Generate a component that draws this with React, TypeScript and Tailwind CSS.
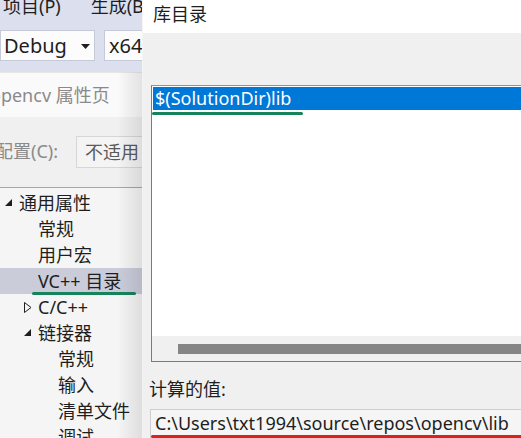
const FONT = "font-['Noto_Sans','Noto_Sans_CJK_SC',sans-serif]";

type TreeItem = {
  label: string;
  level: 0 | 1 | 2;
  icon?: "open" | "closed";
  selected?: boolean;
};

const tree: TreeItem[] = [
  { label: "通用属性", level: 0, icon: "open" },
  { label: "常规", level: 1 },
  { label: "用户宏", level: 1 },
  { label: "VC++ 目录", level: 1, selected: true },
  { label: "C/C++", level: 1, icon: "closed" },
  { label: "链接器", level: 1, icon: "open" },
  { label: "常规", level: 2 },
  { label: "输入", level: 2 },
  { label: "清单文件", level: 2 },
  { label: "调试", level: 2 },
];

const levelPad: Record<number, string> = {
  0: "pl-[5px]",
  1: "pl-[24px]",
  2: "pl-[44px]",
};

const ExpandedIcon = () => (
  <svg width="8" height="8" viewBox="0 0 8 8">
    <polygon points="7,0 7,7 0,7" fill="#1e1e1e" />
  </svg>
);

const CollapsedIcon = () => (
  <svg width="8" height="11" viewBox="0 0 8 11">
    <polygon points="0.5,0.5 7,5.5 0.5,10.5" fill="none" stroke="#1e1e1e" strokeWidth="1" />
  </svg>
);

const LeftPanel = () => (
  <div className="relative w-[143px] shrink-0 flex flex-col overflow-hidden">
    {/* menu bar */}
    <div className="h-[28px] shrink-0 bg-[#dce0ee] flex items-start whitespace-nowrap text-[18px] leading-[18px] text-[#1e1e1e]">
      <span className="-mt-[3px] ml-[3px]">项目(P)</span>
      <span className="-mt-[3px] ml-[30px]">生成(B</span>
    </div>

    {/* toolbar */}
    <div className="h-[44px] shrink-0 bg-[#dce0ee] flex items-start pt-[2px] whitespace-nowrap">
      <div className="w-[95px] shrink-0 h-[31px] bg-[#fcfcfc] border border-[#c5c9d8] flex items-center pl-[3px] text-[20px] leading-[28px] text-[#1e1e1e]">
        <span className="flex-1">Debug</span>
        <span className="mr-[4px] mt-[2px]">
          <svg width="9" height="5" viewBox="0 0 9 5">
            <polygon points="0,0 9,0 4.5,5" fill="#1e1e1e" />
          </svg>
        </span>
      </div>
      <div className="ml-[9px] w-[60px] shrink-0 h-[31px] bg-[#fcfcfc] border border-[#c5c9d8] flex items-center pl-[4px] text-[20px] leading-[28px] text-[#1e1e1e]">
        x64
      </div>
    </div>

    {/* property page title */}
    <div className="h-[45px] shrink-0 bg-[#fafafa] border-t border-[#e6e6e6] flex items-center whitespace-nowrap text-[18px] text-[#8a8a8a]">
      <span className="-ml-[10px]">opencv 属性页</span>
    </div>

    {/* config row */}
    <div className="h-[70px] shrink-0 bg-[#f0f0f0] flex items-start pt-[19px] whitespace-nowrap text-[18px] text-[#8a8a8a]">
      <span className="-ml-[5px] mt-[2px] w-[81px] shrink-0">配置(C):</span>
      <div className="h-[32px] w-[80px] shrink-0 border border-[#d6d6d6] bg-[#f4f4f4] flex items-center pl-[8px] text-[#5a5a5a]">
        不适用
      </div>
    </div>
    <div className="h-px shrink-0 bg-[#a6a6a6]" />

    {/* tree */}
    <div className="flex-1 min-h-0 overflow-hidden bg-[#f5f5f5] pt-[2px] flex flex-col">
      {tree.map((item, i) => (
        <div
          key={i}
          className={`relative h-[26px] shrink-0 flex items-center whitespace-nowrap text-[18px] text-[#1e1e1e] ${levelPad[item.level]} ${item.selected ? "bg-[#cbccda]" : ""}`}
        >
          <span className="w-[14px] shrink-0 flex items-center">
            {item.icon === "open" && <ExpandedIcon />}
            {item.icon === "closed" && <CollapsedIcon />}
          </span>
          <span>{item.label}</span>
          {item.selected && (
            <div className="absolute left-[32px] top-[24px] w-[104px] h-[3px] rounded-full bg-[#16845a]" />
          )}
        </div>
      ))}
    </div>

    {/* shadow cast by the dialog */}
    <div className="absolute top-[72px] bottom-0 right-0 w-[26px] bg-gradient-to-r from-transparent to-black/10 pointer-events-none" />
    <div className="absolute top-0 bottom-0 right-0 w-px bg-[#f4f4f4]" />
  </div>
);

const Dialog = () => (
  <div className="flex-1 min-w-0 flex flex-col bg-[#f0f0f0]">
    <div className="h-[33px] shrink-0 bg-white flex items-start pt-[1px] pl-[10px] text-[18px] text-[#1e1e1e] whitespace-nowrap">
      库目录
    </div>
    <div className="h-[52px] shrink-0" />

    {/* list box */}
    <div className="relative shrink-0 ml-[8px] -mr-[4px] h-[277px] border border-[#7a7a7a] border-t-[#8795ab] bg-white flex flex-col">
      <div className="mt-px ml-px h-[23px] shrink-0 bg-[#0078d7] flex items-center pl-[2px] text-[18px] text-white whitespace-nowrap">
        $(SolutionDir)lib
      </div>
      <div className="absolute left-0 top-[26px] w-[151px] h-[3px] rounded-full bg-[#16845a]" />
      <div className="flex-1" />
      <div className="h-[25px] shrink-0 bg-[#f0f0f0] flex items-center pl-[26px]">
        <div className="flex-1 h-[10px] bg-[#858585]" />
      </div>
    </div>

    <div className="h-[47px] shrink-0 flex items-end pb-[6px] pl-[6px] text-[18px] text-[#1e1e1e] whitespace-nowrap">
      计算的值:
    </div>

    <div className="relative ml-[7px] -mr-[4px] flex-1 border-t border-l border-[#cfcfcf] bg-[#f5f5f5] flex items-start pl-[4px] pt-[1px] text-[18px] leading-[24px] text-[#1e1e1e] whitespace-nowrap">
      C:\Users\txt1994\source\repos\opencv\lib
      <div className="absolute left-0 right-0 top-[25px] h-[3px] rounded-full bg-[#d8231f]" />
    </div>
  </div>
);

export default function App() {
  return (
    <div className={`w-[521px] h-[438px] overflow-hidden flex bg-white ${FONT}`}>
      <LeftPanel />
      <Dialog />
    </div>
  );
}
